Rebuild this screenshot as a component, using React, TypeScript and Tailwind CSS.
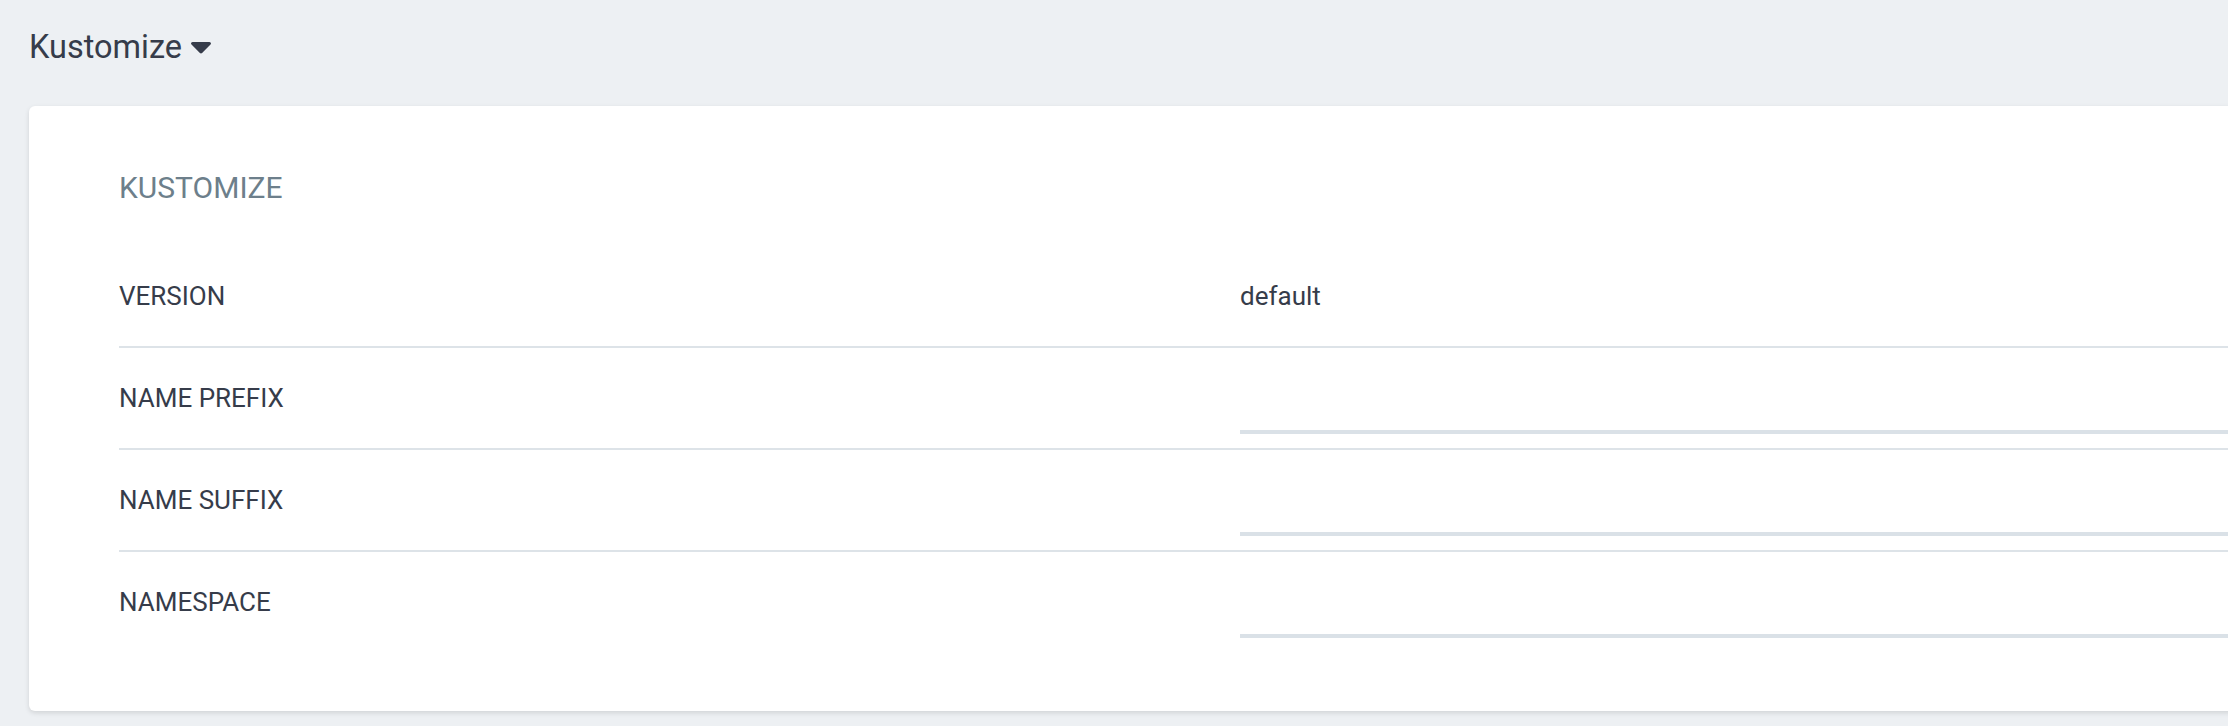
import React from "react"

const rows = [
  { label: "VERSION", value: "default", input: false },
  { label: "NAME PREFIX", value: "", input: true },
  { label: "NAME SUFFIX", value: "", input: true },
  { label: "NAMESPACE", value: "", input: true },
]

function CaretDown() {
  return (
    <svg width="20" height="12" viewBox="0 0 20 12" className="ml-[9px] mt-[1px]">
      <path d="M1.6 0 H18.4 C19.8 0 20.5 1.6 19.5 2.6 L11.1 11 C10.5 11.6 9.5 11.6 8.9 11 L0.5 2.6 C-0.5 1.6 0.2 0 1.6 0 Z" fill="#363c4a" />
    </svg>
  )
}

export default function App() {
  return (
    <div
      className="h-[726px] w-full overflow-hidden bg-[#edf0f3] text-[#363c4a]"
      style={{ fontFamily: "Roboto, 'Noto Sans', sans-serif" }}
    >
      {/* Section header */}
      <div className="flex items-center pl-[29px] pt-[29px] h-[65px]">
        <span className="text-[32.5px] leading-[36px]">Kustomize</span>
        <CaretDown />
      </div>

      {/* Card */}
      <div className="ml-[29px] mt-[41px] w-[2320px] rounded-[6px] bg-white pl-[90px] pt-[68px] pb-[59px] shadow-[0_2px_5px_rgba(0,0,0,0.12)]">
        <div className="mb-[44px] text-[30px] leading-[28px] text-[#6d7f8b]">KUSTOMIZE</div>

        <div className="flex flex-col">
          {rows.map((row, i) => (
            <div
              key={row.label}
              className={
                i < rows.length - 1
                  ? "grid h-[102px] grid-cols-[1121px_1fr] border-b-2 border-[#dde3e8]"
                  : "grid h-[100px] grid-cols-[1121px_1fr]"
              }
            >
              <div className="flex items-center text-[26px] leading-none">{row.label}</div>
              {row.input ? (
                <div className="flex items-end pb-[14px]">
                  <input
                    className="h-[40px] w-full border-b-4 border-[#dae1e7] bg-transparent text-[26px] outline-none"
                    defaultValue={row.value}
                  />
                </div>
              ) : (
                <div className="flex items-center text-[26px] leading-none">{row.value}</div>
              )}
            </div>
          ))}
        </div>
      </div>
    </div>
  )
}
